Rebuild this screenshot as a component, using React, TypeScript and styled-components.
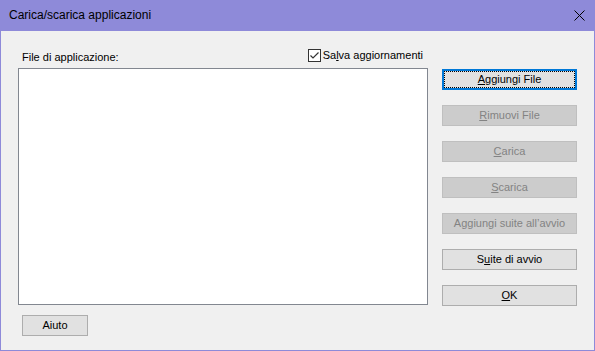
import React from "react";
import styled, { createGlobalStyle } from "styled-components";

const Global = createGlobalStyle`
  html, body { margin: 0; padding: 0; background: #f0f0f0; }
  body { font-family: "Liberation Sans", Arial, sans-serif; }
  * { box-sizing: border-box; }
`;

const Window = styled.div`
  width: 595px;
  height: 351px;
  display: flex;
  flex-direction: column;
  background: #f0f0f0;
  border: 1px solid #8e8ad9;
  border-top: none;
`;

const TitleBar = styled.div`
  height: 31px;
  margin: 0 -1px;
  background: #8e8ad9;
  display: flex;
  align-items: center;
  justify-content: space-between;
  padding: 0 10px 0 9px;
  flex-shrink: 0;
`;

const Title = styled.span`
  font-family: "Liberation Sans", Arial, sans-serif;
  font-size: 12px;
  color: #000;
  padding-bottom: 1px;
`;

const CloseBox = styled.div`
  width: 12px;
  height: 12px;
  display: flex;
  align-items: center;
  justify-content: center;
`;

const Body = styled.div`
  flex: 1;
  display: flex;
  padding-left: 17px;
  gap: 14px;
`;

const LeftCol = styled.div`
  width: 410px;
  display: flex;
  flex-direction: column;
  padding-top: 18px;
`;

const HeaderRow = styled.div`
  height: 19px;
  display: flex;
  align-items: flex-start;
  justify-content: space-between;
  padding: 0 5px 0 4px;
`;

const Label = styled.span`
  font-size: 11px;
  line-height: 13px;
  padding-top: 2px;
  color: #000;
`;

const CheckGroup = styled.label`
  display: flex;
  align-items: flex-start;
  gap: 2px;
  font-size: 11px;
  line-height: 13px;
  color: #000;
`;

const Box = styled.span`
  width: 13px;
  height: 13px;
  border: 1px solid #333;
  background: #fff;
  display: flex;
  align-items: center;
  justify-content: center;
`;

const ListBox = styled.div`
  height: 237px;
  background: #fff;
  border: 1px solid #828790;
`;

const RightCol = styled.div`
  width: 135px;
  display: flex;
  flex-direction: column;
  gap: 15px;
  padding-top: 38px;
`;

const Btn = styled.button<{ $disabled?: boolean; $focused?: boolean; $w?: number }>`
  position: relative;
  width: ${(p) => (p.$w ? `${p.$w}px` : "100%")};
  height: 21px;
  padding: 0;
  margin: 0;
  font-family: "Liberation Sans", Arial, sans-serif;
  font-size: 11px;
  line-height: ${(p) => (p.$focused ? "17px" : "19px")};
  text-align: center;
  color: ${(p) => (p.$disabled ? "#838383" : "#000")};
  background: ${(p) => (p.$disabled ? "#cccccc" : "#e1e1e1")};
  border: ${(p) =>
    p.$focused
      ? "2px solid #0078d7"
      : p.$disabled
      ? "1px solid #bfbfbf"
      : "1px solid #adadad"};
  outline: none;
  ${(p) =>
    p.$focused
      ? `&::after { content: ""; position: absolute; inset: 0; border: 1px dotted #000; }`
      : ""}
`;

const Footer = styled.div`
  padding: 10px 0 0 4px;
`;

const U = styled.span`
  text-decoration: underline;
  text-underline-offset: 1px;
`;

const buttons: { pre?: string; u?: string; post: string; disabled?: boolean; focused?: boolean }[] = [
  { u: "A", post: "ggiungi File", focused: true },
  { u: "R", post: "imuovi File", disabled: true },
  { u: "C", post: "arica", disabled: true },
  { u: "S", post: "carica", disabled: true },
  { post: "Aggiungi suite all\u2019avvio", disabled: true },
  { pre: "S", u: "u", post: "ite di avvio" },
  { u: "O", post: "K" },
];

export default function App() {
  return (
    <>
      <Global />
      <Window>
        <TitleBar>
          <Title>Carica/scarica applicazioni</Title>
          <CloseBox>
            <svg width="11" height="11" viewBox="0 0 11 11">
              <path d="M0.5 0.5 L10.5 10.5 M10.5 0.5 L0.5 10.5" stroke="#000" strokeWidth="1" />
            </svg>
          </CloseBox>
        </TitleBar>
        <Body>
          <LeftCol>
            <HeaderRow>
              <Label>File di applicazione:</Label>
              <CheckGroup>
                <Box>
                  <svg width="11" height="11" viewBox="0 0 11 11">
                    <path d="M1.5 5.5 L4 8 L9.5 2.5" stroke="#333" strokeWidth="1.2" fill="none" />
                  </svg>
                </Box>
                <span>
                  Sa<U>l</U>va aggiornamenti
                </span>
              </CheckGroup>
            </HeaderRow>
            <ListBox />
            <Footer>
              <Btn $w={66}>Aiuto</Btn>
            </Footer>
          </LeftCol>
          <RightCol>
            {buttons.map((b, i) => (
              <Btn key={i} $disabled={b.disabled} $focused={b.focused}>
                {b.pre}
                {b.u && <U>{b.u}</U>}
                {b.post}
              </Btn>
            ))}
          </RightCol>
        </Body>
      </Window>
    </>
  );
}
